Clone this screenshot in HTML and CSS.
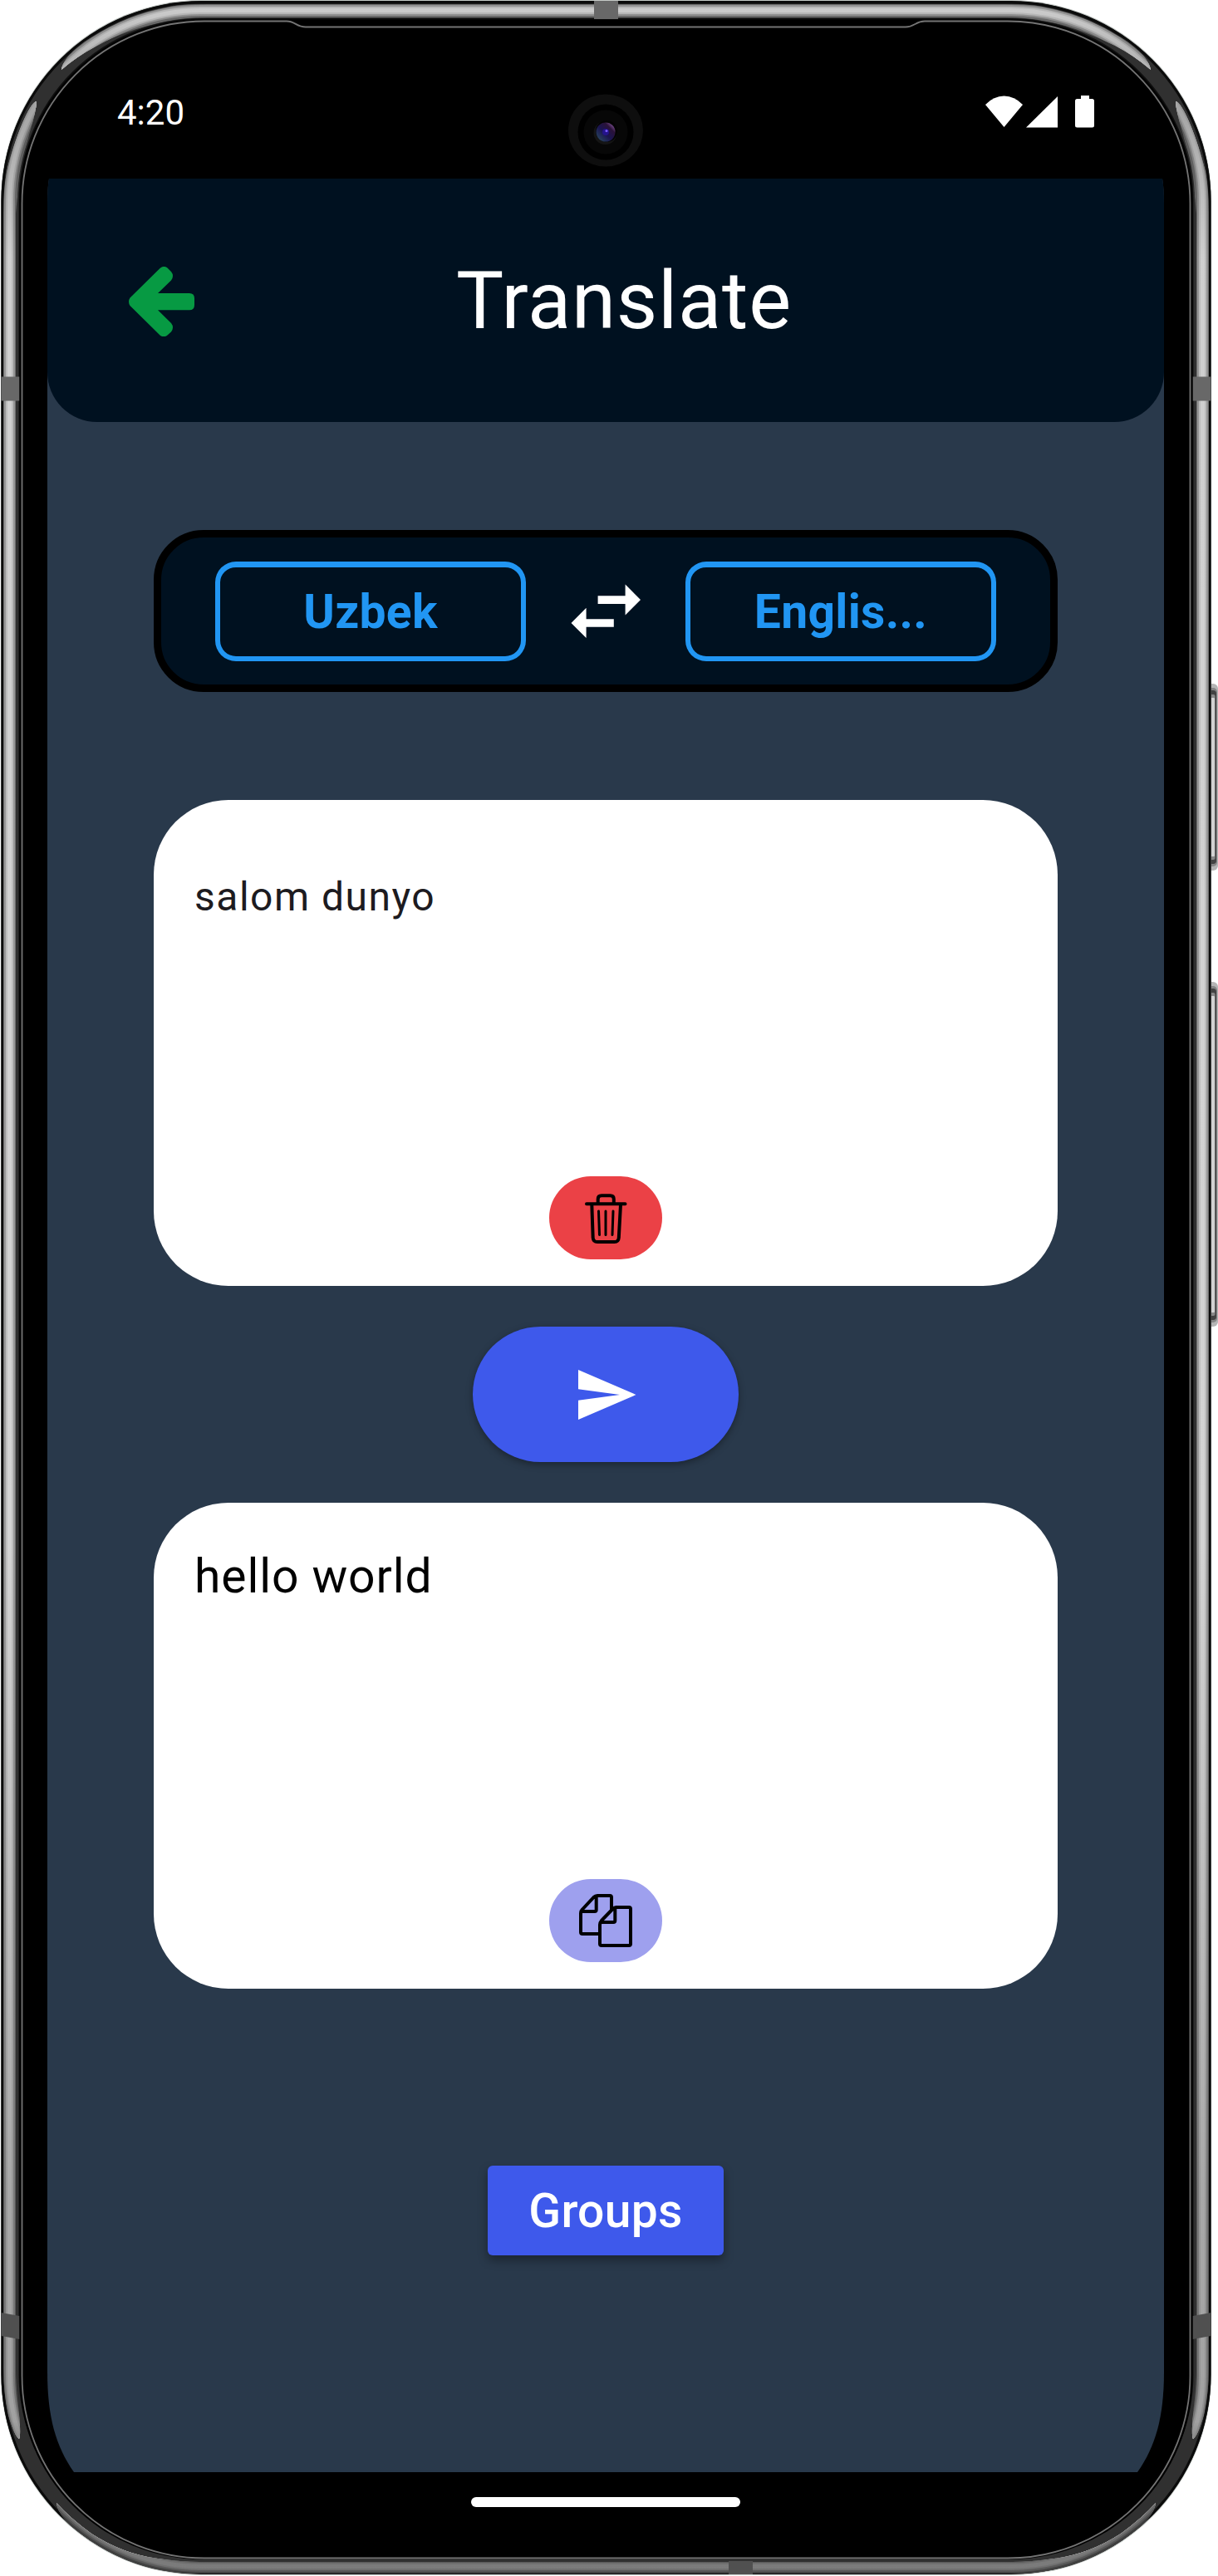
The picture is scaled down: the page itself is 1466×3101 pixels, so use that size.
FILE: index.html
```html
<!DOCTYPE html>
<html lang="en">
<head>
<meta charset="utf-8">
<title>Translate</title>
<link rel="stylesheet" href="styles.css">
</head>
<body>
<div class="phone">
  <svg class="frame" viewBox="0 0 1466 3101" aria-hidden="true">
    <defs>
      <linearGradient id="shade" x1="0" x2="0" y1="0" y2="3101" gradientUnits="userSpaceOnUse">
        <stop offset="0" stop-color="#000" stop-opacity=".04"/><stop offset=".04" stop-color="#000" stop-opacity=".24"/><stop offset=".1" stop-color="#000" stop-opacity=".04"/><stop offset=".6" stop-color="#000" stop-opacity=".02"/><stop offset=".85" stop-color="#000" stop-opacity=".22"/><stop offset=".94" stop-color="#000" stop-opacity=".25"/><stop offset=".955" stop-color="#000" stop-opacity=".5"/><stop offset="1" stop-color="#000" stop-opacity=".42"/>
      </linearGradient>
      <clipPath id="shine">
        <path id="shine-left" d="M44 122C36 122 18 165 8 207Q4 228 4 258V2850Q4 2880 10 2907Q17 2932 23 2936Q26 2930 21 2887Q19 2868 19 2853V258Q20 240 23 224Q27 193 35 162Q44 132 44 122Z"/>
        <use href="#shine-left" transform="matrix(-1 0 0 1 1459 0)"/>
        <path d="M74 84C75 75 85 60 110 45Q155 17 200 9Q215 5 250 5H1209Q1244 5 1259 9Q1304 17 1349 45C1374 60 1384 75 1385 84Q1364 66 1342 55Q1290 30 1259 26Q1238 21 1209 21H250Q221 21 200 26Q150 36 117 55Q92 68 74 84Z"/>
        <path d="M68 3013C69 3024 80 3038 97 3050Q150 3090 207 3096Q225 3098 240 3098H1219Q1234 3098 1252 3096Q1309 3090 1362 3050C1379 3038 1390 3024 1391 3013Q1375 3031 1349 3050Q1310 3075 1269 3080Q1240 3084 1219 3084H240Q219 3084 190 3080Q149 3075 110 3050Q84 3031 68 3013Z"/>
      </clipPath>
    </defs>
    <g id="power" fill="#b5b5b5">
      <rect x="1450" y="823" width="16" height="225" rx="6"/>
      <rect x="1450" y="828" width="15" height="215" rx="5" fill="#858585"/>
      <rect x="1450" y="831" width="14" height="209" rx="4" fill="#424242"/>
      <rect x="1450" y="836" width="12.500" height="199" rx="2" fill="#888"/>
      <rect x="1450" y="840" width="12" height="191" rx="1" fill="#d2d2d2"/>
    </g>
    <g id="volume" fill="#b5b5b5">
      <rect x="1450" y="1182" width="16" height="415" rx="6"/>
      <rect x="1450" y="1187" width="15" height="405" rx="5" fill="#858585"/>
      <rect x="1450" y="1190" width="14" height="399" rx="4" fill="#424242"/>
      <rect x="1450" y="1195" width="12.500" height="389" rx="2" fill="#888"/>
      <rect x="1450" y="1199" width="12" height="381" rx="1" fill="#d2d2d2"/>
    </g>
    <rect x="1" y="0" width="1457" height="3100" rx="241" fill="#c5cac7"/>
    <rect x="1.5" y="1" width="1456" height="3098" rx="241" fill="#0e0e0e"/>
    <rect x="12.5" y="12" width="1434" height="3076" rx="230" fill="none" stroke="#303030" stroke-width="20"/>
    <rect x="3" y="3" width="1453" height="3094" rx="239" fill="none" stroke="#0b0b0b" stroke-width="3"/>
    <g clip-path="url(#shine)" fill="none">
      <rect x="11.5" y="12.5" width="1436" height="3077" rx="230" stroke="#717171" stroke-width="19"/>
      <rect x="11.5" y="12.5" width="1436" height="3077" rx="230" stroke="#9b9b9b" stroke-width="13"/>
      <rect x="11.5" y="12.5" width="1436" height="3077" rx="230" stroke="#c3c3c3" stroke-width="9"/>
      <rect x="11.5" y="12.5" width="1436" height="3077" rx="230" stroke="#d7d7d7" stroke-width="5"/>
      <rect width="1466" height="3101" fill="url(#shade)"/>
    </g>
    <g fill="#686868">
      <path d="M715 1h29v22h-29zM1.500 453.500h22v29h-22zM1435.500 453.500h22v29h-22z"/>
      <path fill="#505050" d="M1.500 2784l22 4v28l-22-4zM1457.500 2784l-22 4v28l22-4zM877 3083h29v16h-29z"/>
    </g>
    <rect x="23.500" y="23.500" width="1412" height="3057.500" rx="220" fill="#000"/>
    <path d="M246 25.500H345C355 25.500 357 32.500 368 32.500H1090C1101 32.500 1102 25.500 1113 25.500H1213A219.500 219.500 0 0 1 1432.500 245V2860A219.500 219.500 0 0 1 1213 3079.500H246A219.500 219.500 0 0 1 26.500 2860V245A219.500 219.500 0 0 1 246 25.500Z" fill="#000" stroke="#747474" stroke-width="1.800"/>
  </svg>

  <div class="status-bar">
    <time class="clock">4:20</time>
    <svg class="camera" viewBox="0 0 90 90" aria-hidden="true">
      <defs>
        <linearGradient id="lens" x1="0" y1="1" x2="1" y2="0"><stop offset="0" stop-color="#2d5361"/><stop offset=".45" stop-color="#1a1450"/><stop offset=".72" stop-color="#2a1238"/><stop offset="1" stop-color="#b57bd0"/></linearGradient>
      </defs>
      <ellipse cx="45" cy="44" rx="45" ry="43.500" fill="#0e0e0e"/>
      <circle cx="45" cy="46" r="33.500" fill="#000"/>
      <circle cx="45" cy="46" r="26.500" fill="#070707"/>
      <circle cx="44.500" cy="47" r="14" fill="#151515"/>
      <circle cx="46" cy="45" r="13" fill="#030303"/>
      <circle cx="45" cy="46" r="11.500" fill="url(#lens)"/>
      <circle cx="45" cy="46" r="4" fill="#24148a"/>
      <circle cx="46" cy="44.500" r="1.500" fill="#7a58ff"/>
    </svg>
    <svg class="indicators" viewBox="1186 115 131 39" fill="#fff" aria-hidden="true">
      <path d="M1186 126Q1196 115.500 1208.500 115.500T1231 126L1208.500 153Z"/>
      <path d="M1235 153.500L1273 116V153.500Z"/>
      <path d="M1301 115h10v4h3.500q2.500 0 2.500 2.500v29.500q0 2.500-2.500 2.500h-18q-2.500 0-2.500-2.500v-29.500q0-2.500 2.500-2.500h4.500z"/>
    </svg>
  </div>

  <main class="app">
    <header class="header">
      <svg class="back" viewBox="155 321 79 84" aria-label="Back">
        <path fill="#079a43" d="M156.500 358.500L192.500 323Q197 319 201.500 322.500L206 327Q210 332 206 337.500L190 353H228Q234 353 234 359V367.300Q234 373.300 228 373.300H190L206 389Q210 394 206 399.500L201.500 403.500Q197 407 192.500 403.500L156.500 368Q153.500 363 156.500 358.500Z"/>
      </svg>
      <h1 class="title">Translate</h1>
    </header>

    <section class="languages">
      <button class="language">Uzbek</button>
      <svg class="swap" viewBox="687 702 84 66" fill="#fff" aria-label="Swap languages">
        <path d="M719.600 716.300H752.600V702.500L771 721L752.600 739.500V726H719.600Z"/>
        <path d="M738.800 744.300V753.700H705.600V767L687.500 749L705.600 730.700V744.300Z"/>
      </svg>
      <button class="language">Englis...</button>
    </section>

    <section class="card source">
      <p class="source-text">salom dunyo</p>
      <button class="pill clear" aria-label="Clear">
        <svg class="trash" viewBox="703 1436 52 62" fill="none" stroke="#000" stroke-width="4" stroke-linecap="round" aria-hidden="true">
          <path d="M706 1449.300H752.500M719.700 1449V1443.500Q719.700 1439.200 724 1439.200H734.500Q738.800 1439.200 738.800 1443.500V1449M712.300 1450L713.700 1490Q714 1495 719 1495H739.500Q744.500 1495 744.800 1490L747 1450"/>
          <path stroke-width="3" d="M720.500 1458L721.500 1486.500M729 1458V1486.500M738 1458L737 1486.500"/>
        </svg>
      </button>
    </section>

    <button class="send" aria-label="Translate text">
      <svg class="plane" viewBox="696 1649 70 60" aria-hidden="true"><path fill="#fff" d="M696 1649L765.500 1679L696 1709V1685.700L746 1679L696 1672.300Z"/></svg>
    </button>

    <section class="card result">
      <p class="result-text">hello world</p>
      <button class="pill copy" aria-label="Copy">
        <svg class="pages" viewBox="697 2279 64 64" fill="none" stroke="#000" stroke-width="4" stroke-linejoin="round" aria-hidden="true">
          <path d="M722 2327H701Q699 2327 699 2325V2302Q699 2299.500 701 2297.500L714.500 2283Q716.500 2281 719 2281H734Q736 2281 736 2283V2298M717.700 2282V2298Q717.700 2300 715.700 2300H700"/>
          <path d="M724 2341H757Q759 2341 759 2339V2297Q759 2295 757 2295H741.500Q739.500 2295 737.500 2297L724 2311Q722 2313.500 722 2316V2339Q722 2341 724 2341ZM740.300 2296V2311Q740.300 2313 738.300 2313H723"/>
        </svg>
      </button>
    </section>

    <button class="groups">Groups</button>
  </main>
  <div class="navigation"><span class="home-bar"></span></div>
</div>
</body>
</html>
```
FILE: styles.css
```css
* { box-sizing: border-box; }
body { margin: 0; background: #fff; font-family: Roboto, sans-serif; }
button { border: 0; padding: 0; font-family: inherit; }
svg { display: block; flex: none; }

.phone { position: relative; width: 1466px; height: 3101px; padding: 0 65px 0 57px; overflow: hidden; }
.frame { position: absolute; inset: 0; width: 1466px; height: 3101px; }

.status-bar { position: relative; height: 215px; padding: 0 84px; display: grid; grid-template-columns: 1fr 90px 1fr; }
.clock { color: #fff; font-size: 42px; line-height: 50px; margin-top: 111px; }
.camera { width: 90px; height: 90px; margin-top: 113px; }
.indicators { width: 131px; height: 39px; margin-top: 115px; justify-self: end; }

.app {
  position: relative; height: 2761px; background: #29394b;
  display: flex; flex-direction: column; align-items: center;
  clip-path: path("M2 0H1342Q1344 12 1344 30V2640C1344 2694 1334 2730 1312 2761H32C10 2730 0 2694 0 2640V30Q0 12 2 0Z");
}
.header { width: 100%; height: 293px; padding-left: 98px; display: flex; align-items: center; background: #001120; border-radius: 0 0 60px 60px; }
.back { width: 79px; height: 84px; margin-top: 3px; }
.title { margin: 0 0 0 315px; color: #fff; font-size: 96px; font-weight: 400; line-height: 112px; letter-spacing: 0.75px; }

.languages {
  width: 1088px; height: 195px; margin-top: 130px; padding: 0 65px;
  display: flex; align-items: center; justify-content: space-between;
  background: #001120; border: 9px solid #000; border-radius: 60px;
}
.language { width: 374px; height: 120px; background: none; border: 6px solid #2196f3; border-top-width: 7px; border-radius: 25px; color: #2196f3; font-size: 57px; font-weight: 700; letter-spacing: 0.3px; }
.swap { width: 84px; height: 66px; }

.card { width: 1088px; height: 585px; padding: 0 49px 32px; display: flex; flex-direction: column; justify-content: space-between; align-items: center; background: #fff; border-radius: 90px; }
.card p { margin: 0; align-self: flex-start; }
.source { margin-top: 130px; padding-top: 81px; }
.source-text { color: #1d1b20; font-size: 48px; line-height: 72px; letter-spacing: 1.5px; }
.result { padding-top: 46px; }
.result-text { color: #000; font-size: 57px; line-height: 86px; letter-spacing: 0.9px; }

.pill { width: 136px; height: 100px; border-radius: 50px; display: flex; justify-content: center; align-items: center; }
.clear { background: #eb4146; }
.copy { background: #9ea0ee; }
.trash { width: 52px; height: 62px; margin-top: 2px; }
.pages { width: 64px; height: 64px; }

.send { width: 320px; height: 163px; margin: 49px 0; border-radius: 82px; display: flex; justify-content: center; align-items: center; background: #3e59eb; box-shadow: 0 3px 8px rgba(0, 0, 0, .35); }
.plane { width: 70px; height: 60px; margin-left: 3px; }
.groups { width: 284px; height: 108px; margin-top: 213px; border-radius: 6px; background: #3e59eb; color: #fff; font-size: 57px; font-weight: 500; letter-spacing: 0.3px; box-shadow: 0 6px 12px rgba(0, 0, 0, .35); }

.navigation { position: relative; height: 125px; padding-top: 30px; }
.home-bar { display: block; width: 324px; height: 12px; margin: 0 auto; border-radius: 6px; background: #fff; }
```
